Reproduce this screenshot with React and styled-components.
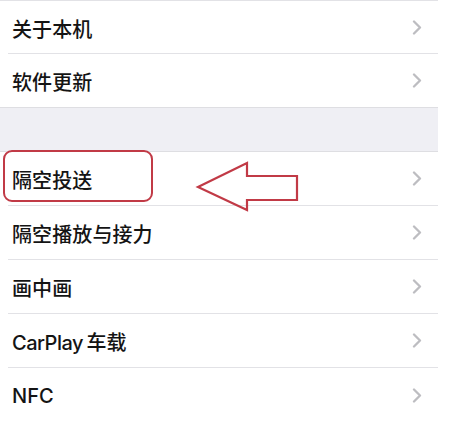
import React from "react";
import styled, { createGlobalStyle } from "styled-components";

const GlobalStyle = createGlobalStyle`
    html, body {
        margin: 0;
        padding: 0;
        background: #ffffff;
    }
    body {
        font-family: Inter, "Noto Sans CJK SC", sans-serif;
    }
`

const Page = styled.div`
    width: 457px;
    height: 426px;
    overflow: hidden;
    background: #ffffff;
`

const List = styled.div`
    width: 438px;
    border-top: 1px solid #e2e2e6;
`

const Group = styled.div`
    background: #ffffff;
    border-bottom: ${props => props.last ? "none" : "1px solid #dedee2"};
`

const Spacer = styled.div`
    height: 43px;
    background: #efeff4;
    border-bottom: 1px solid #dedee2;
`

const Row = styled.div`
    position: relative;
    height: ${props => props.tall ? "54px" : "53px"};
    padding-left: 8px;
    display: flex;
`

const Inner = styled.div`
    flex: 1;
    display: flex;
    align-items: center;
    justify-content: space-between;
    padding: 2px 16px 0 4px;
    border-bottom: ${props => props.divider ? "1px solid #e2e2e6" : "none"};
`

const Label = styled.span`
    font-size: 20px;
    font-weight: 500;
    color: #141414;
    letter-spacing: 0.1px;
    word-spacing: -2px;
`

const Latin = styled.span`
    letter-spacing: -0.5px;
`

const Chevron = styled.svg`
    width: 10px;
    height: 15px;
    margin-top: -2px;
`

const Highlight = styled.div`
    position: absolute;
    left: 3px;
    top: -2px;
    width: 150px;
    height: 52px;
    box-sizing: border-box;
    border: 2px solid #c13a46;
    border-radius: 9px;
`

const Arrow = styled.svg`
    position: absolute;
    left: 196px;
    top: 9px;
    width: 104px;
    height: 52px;
    overflow: visible;
`

const Arrowhead = () => (
    <Arrow viewBox="0 0 104 52">
        <polygon
            points="2,26 51,2 51,15 101,15 101,39 51,39 51,49"
            fill="none"
            stroke="#c13a46"
            strokeWidth="2.2"
            strokeLinejoin="miter"
        />
    </Arrow>
)

const Item = ({ label, divider, marked, tall }) => (
    <Row tall={tall}>
        <Inner divider={divider}>
            <Label>{label}</Label>
            <Chevron viewBox="0 0 10 15">
                <polyline points="2,1.5 8,7.5 2,13.5" fill="none" stroke="#bdbdc1" strokeWidth="2.3" strokeLinecap="round" strokeLinejoin="round" />
            </Chevron>
        </Inner>
        {marked && <><Highlight /><Arrowhead /></>}
    </Row>
)

const App = () => {
    return (
        <>
        <GlobalStyle />
        <Page>
            <List>
                <Group>
                    <Item label="关于本机" divider />
                    <Item label="软件更新" />
                </Group>
                <Spacer />
                <Group last>
                    <Item label="隔空投送" divider marked tall />
                    <Item label="隔空播放与接力" divider tall />
                    <Item label="画中画" divider tall />
                    <Item label={<><Latin>CarPlay</Latin> 车载</>} divider tall />
                    <Item label="NFC" tall />
                </Group>
            </List>
        </Page>
        </>
    )
}

export default App
